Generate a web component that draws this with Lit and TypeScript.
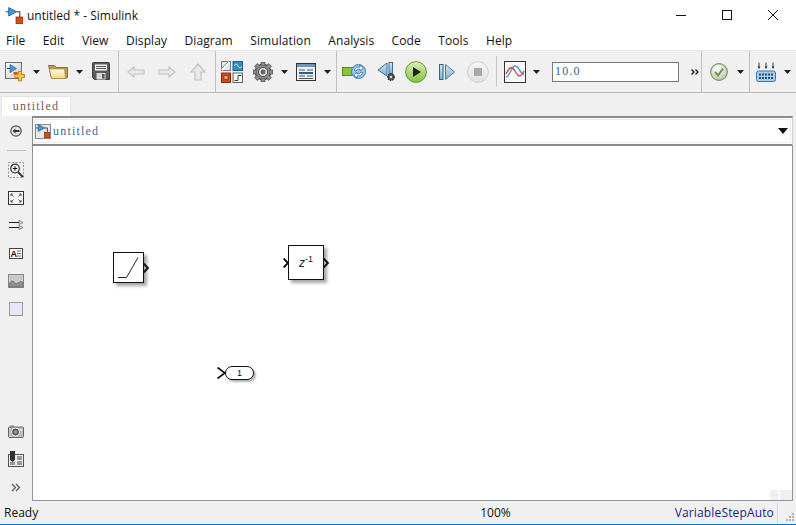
import { LitElement, css, html, svg } from 'lit'
import { customElement } from 'lit/decorators.js'

const MENUS = ['File', 'Edit', 'View', 'Display', 'Diagram', 'Simulation', 'Analysis', 'Code', 'Tools', 'Help']

const caret = (cls = '') => html`<svg class="caret ${cls}" width="7" height="4" viewBox="0 0 7 4"><path d="M0 0h7L3.500 4z" fill="#222" /></svg>`

/** Simulink mark shared by title bar, new-model and address icons. */
const logo = svg`
  <path d="M0 4.500h3" stroke="#3a3a3a" fill="none" />
  <path d="M2.500 .5L10 4.500 2.500 8.500z" fill="#3f9bd8" stroke="#1d5f96" stroke-width=".8" />
  <path d="M10 4.500h3v5" stroke="#3a3a3a" fill="none" />
  <rect x="9.500" y="9.500" width="6.500" height="6.500" fill="#d9481c" stroke="#8c2c10" stroke-width=".8" />`

const newIcon = html`<svg width="20" height="20" viewBox="0 0 20 20">
  <defs><linearGradient id="nb" x1="0" y1="0" x2="1" y2="1"><stop offset="0" stop-color="#fff" /><stop offset="1" stop-color="#c9c9c9" /></linearGradient></defs>
  <rect x=".5" y=".5" width="16" height="16" fill="url(#nb)" stroke="#6e6e6e" />
  <path d="M2 6.500h3" stroke="#333" />
  <path d="M5 2.500l6.500 4-6.500 4z" fill="#3f9bd8" stroke="#1d5f96" stroke-width=".7" />
  <rect x="8.500" y="10" width="4" height="2.500" fill="#d9481c" />
  <path d="M13.500 9.500h3v3h3v3h-3v3.500h-3v-3.500h-3.500v-3h3.500z" fill="#f6c945" stroke="#b78a1c" />
</svg>`

const folderIcon = html`<svg width="20" height="14" viewBox="0 0 20 14">
  <defs><linearGradient id="fo" x1="0" y1="0" x2="0" y2="1"><stop offset="0" stop-color="#fffbe0" /><stop offset="1" stop-color="#f2d77c" /></linearGradient></defs>
  <path d="M.5 .5h6l1.500 2h11.500v10l-2 1h-14z" fill="#b9985c" stroke="#8d7038" />
  <path d="M1.500 4h15l1 9.500h-14z" fill="url(#fo)" stroke="#a58a4c" stroke-width=".7" />
</svg>`

const saveIcon = html`<svg width="18" height="19" viewBox="0 0 18 19">
  <path d="M1.500 .5h15a1 1 0 0 1 1 1v16h-15l-2-2v-14a1 1 0 0 1 1-1z" fill="#5a5a5a" stroke="#3c3c3c" />
  <rect x="3" y="2.500" width="12" height="6" fill="#f4f4f4" />
  <path d="M4 4.500h10M4 6.500h10" stroke="#555" />
  <rect x="4.500" y="11" width="9" height="6.500" fill="#d8d8d8" />
  <rect x="10" y="12" width="2.500" height="4.500" fill="#555" />
</svg>`

const navArrow = (d: string, w: number, h: number) => html`<svg width=${w} height=${h} viewBox="0 0 ${w} ${h}">
  <path d=${d} fill="#e8e8e8" stroke="#c4c4c4" stroke-width="1.200" />
</svg>`

const gridIcon = html`<svg width="22" height="22" viewBox="0 0 22 22">
  <rect x=".5" y=".5" width="9" height="9" fill="#e4e4e4" stroke="#777" />
  <path d="M1 9L8 1" stroke="#fff" stroke-width="2" />
  <path d="M1 7L7 1" stroke="#888" />
  <rect x="12" y=".5" width="9.500" height="9" fill="#2f8cc4" stroke="#1e5f8c" />
  <path d="M13 5q2-4 4 0t4 0" stroke="#bfe4f8" fill="none" />
  <rect x=".5" y="12" width="9" height="9.500" fill="#d2491e" stroke="#8c2c10" />
  <rect x="3" y="14.500" width="4" height="4" fill="#f0a070" stroke="#8c2c10" stroke-width=".7" />
  <rect x="12" y="12" width="9.500" height="9.500" fill="#f6f6f6" stroke="#666" />
  <path d="M13.500 19.500h3.500v-5h3.500" stroke="#444" fill="none" />
</svg>`

const gear = (size: number, color: string, inner: string) => html`<svg width=${size} height=${size} viewBox="0 0 20 20">
  <path d="M10 10m-8 0a8 8 0 1 0 16 0a8 8 0 1 0-16 0" fill=${color} stroke="#3e3e3e" stroke-width=".8" />
  ${[0, 45, 90, 135, 180, 225, 270, 315].map(
    (a) => svg`<rect x="8" y="0" width="4" height="4" fill=${color} stroke="#3e3e3e" stroke-width=".6" transform="rotate(${a} 10 10)" />`,
  )}
  <circle cx="10" cy="10" r="6.500" fill=${color} />
  <circle cx="10" cy="10" r="4.600" fill=${inner} stroke="#555" />
  <circle cx="10" cy="10" r="2.400" fill="#666" />
</svg>`

const tableIcon = html`<svg width="20" height="18" viewBox="0 0 20 18">
  <rect x=".5" y=".5" width="19" height="17" fill="#f0f0f0" stroke="#333" />
  <rect x="1" y="1" width="18" height="3" fill="#6b95bd" />
  <path d="M3 7h6M11 7h6M3 13h6M11 13h6M3 15.500h14" stroke="#555" />
  <path d="M3 10h14" stroke="#1f5f9a" stroke-width="2" />
</svg>`

const updateIcon = html`<svg width="24" height="17" viewBox="0 0 24 17">
  <rect x=".5" y="4.500" width="10" height="8" fill="#8ebf3c" stroke="#5c8a20" />
  <circle cx="16.500" cy="8.500" r="7" fill="#9cc6e8" stroke="#3f7fb4" />
  <path d="M12 7q2-4 6-3V2l3.500 3-3.500 3V6q-3 0-4 2zM21 10q-2 4-6 3v2l-3.500-3 3.500-3v2q3 0 4-2z" fill="#e8f4fc" stroke="#2d6ea8" stroke-width=".8" />
</svg>`

const stepBackIcon = html`<svg width="19" height="19" viewBox="0 0 19 19">
  <defs><linearGradient id="sb" x1="0" y1="0" x2="0" y2="1"><stop offset="0" stop-color="#d6e8f6" /><stop offset="1" stop-color="#7aaed8" /></linearGradient></defs>
  <path d="M10 1v13L1 8z" fill="url(#sb)" stroke="#3c6e9a" />
  <rect x="12" y=".5" width="3.500" height="11" fill="url(#sb)" stroke="#3c6e9a" />
  <circle cx="14" cy="15" r="3.200" fill="#555" stroke="#333" stroke-dasharray="1.500 .8" stroke-width="1.400" />
  <circle cx="14" cy="15" r="1.200" fill="#ddd" />
</svg>`

const playIcon = html`<svg width="22" height="22" viewBox="0 0 22 22">
  <defs><linearGradient id="pl" x1="0" y1="0" x2="0" y2="1"><stop offset="0" stop-color="#d8eeb4" /><stop offset="1" stop-color="#86c440" /></linearGradient></defs>
  <circle cx="11" cy="11" r="10.400" fill="url(#pl)" stroke="#5f9a2c" />
  <path d="M8 6l8 5-8 5z" fill="#222" />
</svg>`

const stepFwdIcon = html`<svg width="16" height="16" viewBox="0 0 16 16">
  <defs><linearGradient id="sf" x1="0" y1="0" x2="0" y2="1"><stop offset="0" stop-color="#d6e8f6" /><stop offset="1" stop-color="#7aaed8" /></linearGradient></defs>
  <rect x=".5" y=".5" width="3.500" height="15" fill="url(#sf)" stroke="#34648e" />
  <path d="M6.500 .5v15L15.500 8z" fill="url(#sf)" stroke="#4c7ea8" />
</svg>`

const stopIcon = html`<svg width="22" height="22" viewBox="0 0 22 22">
  <defs><linearGradient id="st" x1="0" y1="0" x2="0" y2="1"><stop offset="0" stop-color="#f6f6f6" /><stop offset="1" stop-color="#e0e0e0" /></linearGradient></defs>
  <circle cx="11" cy="11" r="10.400" fill="url(#st)" stroke="#cfcfcf" />
  <rect x="7" y="7" width="8" height="8" fill="#a8a8a8" />
</svg>`

const scopeIcon = html`<svg width="22" height="22" viewBox="0 0 22 22">
  <rect x=".5" y=".5" width="21" height="21" fill="#fafafa" stroke="#333" />
  <path d="M2 16c4 0 5-11 9-11s5 8 9 8" stroke="#5c9ad0" stroke-width="1.500" fill="none" />
  <path d="M2 13c4-8 6-8 9-3s5 8 9 0" stroke="#c8403a" stroke-width="1.300" fill="none" />
</svg>`

const checkIcon = html`<svg width="18" height="18" viewBox="0 0 18 18">
  <defs><radialGradient id="ck" cx=".4" cy=".3" r=".8"><stop offset="0" stop-color="#fff" /><stop offset="1" stop-color="#b8b8b8" /></radialGradient></defs>
  <circle cx="9" cy="9" r="8.300" fill="url(#ck)" stroke="#7f9c50" stroke-width="1.200" />
  <path d="M5 9l3 3.500 5-7" stroke="#6c9a30" stroke-width="2" fill="none" />
</svg>`

const keysIcon = html`<svg width="20" height="20" viewBox="0 0 20 20">
  <rect x=".5" y="9" width="19" height="10.500" rx="2" fill="#a8cdea" stroke="#3a78ac" />
  <path d="M3 .5v5M10 .5v5M17 .5v5" stroke="#333" />
  <path d="M1.500 4.500h3L3 7zM8.500 4.500h3L10 7zM15.500 4.500h3L17 7z" fill="#234" />
  ${[11.5, 15].map((y) => [3, 6, 9, 12, 15].map((x) => svg`<rect x=${x} y=${y} width="2" height="2" fill="#1f4f7c" />`))}
</svg>`

const backIcon = html`<svg width="12" height="12" viewBox="0 0 12 12">
  <circle cx="6" cy="6" r="5.200" fill="#e6e6e6" stroke="#555" stroke-width="1.200" />
  <path d="M2.500 6l3-2.500V5h4v2h-4v1.500z" fill="#333" />
</svg>`

const zoomIcon = html`<svg width="16" height="16" viewBox="0 0 16 16">
  <rect x=".5" y=".5" width="15" height="15" fill="none" stroke="#999" stroke-dasharray="2 1.500" />
  <circle cx="7" cy="6.500" r="4.300" fill="#f6f6f6" stroke="#333" stroke-width="1.200" />
  <path d="M4.800 6.500h4.400M7 4.300v4.400" stroke="#111" />
  <path d="M10 10l5 5" stroke="#333" stroke-width="1.800" />
</svg>`

const fitIcon = html`<svg width="16" height="14" viewBox="0 0 16 14">
  <rect x=".5" y=".5" width="15" height="13" fill="#f6f6f6" stroke="#333" />
  <path d="M3 3l2.500 2.500M3 3h2M3 3v2M13 3l-2.500 2.500M13 3h-2M13 3v2M3 11l2.500-2.500M3 11h2M3 11v-2M13 11l-2.500-2.500M13 11h-2M13 11v-2" stroke="#555" fill="none" />
</svg>`

const linesIcon = html`<svg width="15" height="10" viewBox="0 0 15 10">
  <path d="M0 2.500h10M0 7.500h10" stroke="#222" />
  <path d="M10 .5l4 2-4 2zM10 5.500l4 2-4 2z" fill="#eee" stroke="#666" stroke-width=".8" />
</svg>`

const annotIcon = html`<svg width="14" height="11" viewBox="0 0 14 11">
  <rect x=".5" y=".5" width="13" height="10" fill="#fff" stroke="#444" />
  <text x="1.500" y="8.500" class="annot">A</text>
  <path d="M8 3h4M8 5.500h4M8 8h4" stroke="#666" />
</svg>`

const imageIcon = html`<svg width="16" height="14" viewBox="0 0 16 14">
  <rect x=".5" y=".5" width="15" height="13" fill="#c8c8c8" stroke="#8a8a8a" />
  <path d="M1 10q3-5 5-2t4 1 5-1v5H1z" fill="#8e8e8e" stroke="#666" stroke-width=".7" />
</svg>`

const cameraIcon = html`<svg width="16" height="13" viewBox="0 0 16 13">
  <rect x=".5" y="2" width="15" height="10.500" rx="1" fill="#bdbdbd" stroke="#666" />
  <rect x="2" y=".5" width="4" height="2" fill="#888" />
  <circle cx="7.500" cy="7" r="4" fill="#555" stroke="#eee" />
  <circle cx="7.500" cy="7" r="1.800" fill="#999" />
  <rect x="12" y="4" width="2" height="1.500" fill="#eee" />
</svg>`

const layoutIcon = html`<svg width="16" height="16" viewBox="0 0 16 16">
  <rect x=".5" y="3.500" width="15" height="12" fill="#eee" stroke="#555" />
  <rect x="2" y="0" width="5" height="9" fill="#333" />
  <path d="M2 9h5l-2.500 2z" fill="#333" />
  <rect x="9" y="5" width="5" height="4" fill="#999" />
  <rect x="9" y="10" width="5" height="4" fill="#999" />
  <rect x="2" y="11" width="5" height="3" fill="#999" />
</svg>`

const moreIcon = html`<svg width="10" height="9" viewBox="0 0 10 9">
  <path d="M1 1l3.500 3.500L1 8M5 1l3.500 3.500L5 8" fill="none" stroke="#555" stroke-width="1.200" />
</svg>`

const overflowIcon = html`<svg width="8" height="6" viewBox="0 0 8 6">
  <path d="M.5 .5L3 3 .5 5.500M4.500 .5L7 3 4.500 5.500" fill="none" stroke="#111" stroke-width="1.300" />
</svg>`

const portOut = html`<svg class="port" width="6" height="10" viewBox="0 0 6 10"><path d="M.7 .5L5 5 .7 9.500" fill="none" stroke="#111" stroke-width="1.900" /></svg>`

@customElement('app-root')
export class AppRoot extends LitElement {
  render() {
    return html`
      <div class="title">
        <svg width="17" height="17" viewBox="0 0 16 16">${logo}</svg>
        <span class="title-text">untitled * - Simulink</span>
        <div class="win">
          <svg width="46" height="16" viewBox="0 0 46 16"><path d="M18 8.500h10" stroke="#111" /></svg>
          <svg width="46" height="16" viewBox="0 0 46 16"><rect x="18.500" y="3.500" width="9" height="9" fill="none" stroke="#111" /></svg>
          <svg width="46" height="16" viewBox="0 0 46 16"><path d="M18 3l10 10M28 3L18 13" stroke="#111" /></svg>
        </div>
      </div>
      <div class="menu">${MENUS.map((m) => html`<span>${m}</span>`)}</div>
      <div class="toolbar">
        <div class="grp g1">
          ${newIcon}${caret('m8')}<span class="m8 ic">${folderIcon}</span>${caret('m8')}<span class="m9 ic">${saveIcon}</span>
        </div>
        <div class="grp g2">
          ${navArrow('M7 1L1 6l6 5V8h10V4H7z', 18, 12)}
          <span class="m13 ic">${navArrow('M11 1l6 5-6 5V8H1V4h10z', 18, 12)}</span>
          <span class="m14 ic">${navArrow('M8 1l7 8h-4v8H5V9H1z', 16, 18)}</span>
        </div>
        <div class="grp g3">
          ${gridIcon}<span class="m10 ic">${gear(20, '#8a8a8a', '#d6d6d6')}</span>${caret('m8')}
          <span class="m8 ic">${tableIcon}</span>${caret('m8')}
        </div>
        <div class="grp g4">
          ${updateIcon}<span class="m11 ic">${stepBackIcon}</span><span class="m9 ic">${playIcon}</span>
          <span class="m12 ic">${stepFwdIcon}</span><span class="m12 ic">${stopIcon}</span>
          <i class="short"></i>
          ${scopeIcon}${caret('m7')}
          <input class="time" .value=${'10.0'} />
          <span class="m12 ic">${overflowIcon}</span>
        </div>
        <div class="grp g5">${checkIcon}${caret('m9')}</div>
        <div class="grp g6">${keysIcon}${caret('m8')}</div>
      </div>
      <div class="tabs"><div class="tab">untitled</div></div>
      <div class="main">
        <div class="palette">
          ${backIcon}
          <i class="pal-sep"></i>
          <span class="zoom ic">${zoomIcon}</span>
          <span class="fit ic">${fitIcon}</span>
          <span class="lines ic">${linesIcon}</span>
          <span class="annotw ic">${annotIcon}</span>
          <span class="img ic">${imageIcon}</span>
          <i class="area"></i>
          <span class="cam ic">${cameraIcon}</span>
          <span class="lay ic">${layoutIcon}</span>
          <span class="more ic">${moreIcon}</span>
        </div>
        <div class="work">
          <div class="addr">
            <div class="addr-in">
              <span class="addr-icon"><svg width="14" height="14" viewBox="0 0 16 16">${logo}</svg></span>
              <span class="addr-text">untitled</span>
              <svg class="addr-caret" width="10" height="6" viewBox="0 0 10 6"><path d="M0 0h10L5 6z" fill="#111" /></svg>
            </div>
          </div>
          <div class="canvas">
            <div class="block ramp">
              <svg width="31" height="31" viewBox="0 0 31 31"><path d="M5 25.500h8.500L25 5.500" fill="none" stroke="#222" /></svg>
              <span class="out">${portOut}</span>
            </div>
            <div class="block delay">
              <span class="z">z<sup>-1</sup></span>
              <span class="in">${portOut}</span>
              <span class="out">${portOut}</span>
            </div>
            <div class="outport">
              <span>1</span>
              <svg class="xport" width="9" height="12" viewBox="0 0 9 12"><path d="M.5 .5L8 6 .5 11.500" fill="none" stroke="#111" stroke-width="1.700" /></svg>
            </div>
            <i class="ghost"></i>
          </div>
        </div>
      </div>
      <div class="status">
        <span class="ready">Ready</span>
        <span class="pct">100%</span>
        <span class="solver">VariableStepAuto</span>
        <i class="st-sep"></i>
        <svg class="grip" width="10" height="9" viewBox="0 0 10 9">
          ${[[7, 0], [4, 3], [7, 3], [1, 6], [4, 6], [7, 6]].map(([x, y]) => svg`<rect x=${x} y=${y} width="2" height="2" fill="#b4b4b4" />`)}
        </svg>
      </div>
    `
  }

  static styles = css`
    :host {
      display: flex;
      flex-direction: column;
      width: 796px;
      height: 525px;
      overflow: hidden;
      background: #f0f0f0;
      font: 12px 'Open Sans', 'Noto Sans', sans-serif;
      color: #111;
    }
    svg { display: block; flex: none; }
    .ic { display: block; flex: none; }
    i { display: block; flex: none; }

    .title {
      display: flex;
      align-items: center;
      height: 30px;
      flex: none;
      padding-left: 6px;
      background: #fff;
    }
    .title-text { margin-left: 4px; font-size: 12px; }
    .win { display: flex; margin-left: auto; margin-right: 0; }

    .menu {
      display: flex;
      gap: 17.4px;
      letter-spacing: 0.1px;
      align-items: center;
      height: 20px;
      flex: none;
      padding-left: 6px;
      background: #fff;
      color: #111;
    }

    .toolbar {
      display: flex;
      height: 43px;
      flex: none;
      border-top: 1px solid #e6e6e6;
      border-bottom: 1px solid #b8b8b8;
      box-sizing: border-box;
      background: #f0f0f0;
    }
    .grp {
      display: flex;
      align-items: center;
      box-sizing: border-box;
      border-right: 1px solid #c0c0c0;
      flex: none;
    }
    .g1 { width: 119px; padding-left: 5px; }
    .g2 { width: 97px; padding-left: 8px; }
    .g3 { width: 121px; padding-left: 5px; }
    .g4 { width: 365px; padding-left: 5px; }
    .g5 { width: 48px; padding-left: 8px; }
    .g6 { flex: 1; padding-left: 6px; border-right: none; }
    .m7 { margin-left: 7px; }
    .m8 { margin-left: 8px; }
    .m9 { margin-left: 9px; }
    .m10 { margin-left: 10px; }
    .m11 { margin-left: 11px; }
    .m12 { margin-left: 12px; }
    .m13 { margin-left: 13px; }
    .m14 { margin-left: 14px; }
    .short { width: 1px; height: 31px; margin: 0 7px; background: #c8c8c8; }
    .time {
      width: 127px;
      height: 20px;
      box-sizing: border-box;
      margin: 0 0 0 12px;
      padding: 0 2px;
      border: 1px solid #7a7a7a;
      outline: none;
      background: #fff;
      color: #2f5f90;
      font: 12px 'Liberation Serif', serif;
      letter-spacing: 1.2px;
    }

    .tabs {
      display: flex;
      align-items: flex-end;
      height: 23px;
      flex: none;
      padding-left: 1px;
    }
    .tab {
      display: flex;
      align-items: center;
      justify-content: center;
      width: 70px;
      height: 20px;
      box-sizing: border-box;
      background: #fff;
      border: 1px solid #e4e4e4;
      border-bottom: none;
      color: #7a5a50;
      font: 12px 'Liberation Serif', serif;
      letter-spacing: 1.2px;
    }

    .main { display: flex; flex: 1; min-height: 0; }
    .palette {
      display: flex;
      flex-direction: column;
      align-items: center;
      width: 32px;
      flex: none;
      padding-top: 9px;
      box-sizing: border-box;
    }
    .pal-sep { width: 19px; height: 1px; margin-top: 13px; background: #c0c0c0; }
    .zoom { margin-top: 11px; }
    .fit { margin-top: 13px; }
    .lines { margin-top: 15px; }
    .annotw { margin-top: 18px; }
    .annot { font: 700 9px 'Liberation Sans', sans-serif; fill: #111; }
    .img { margin-top: 15px; }
    .area {
      width: 14px;
      height: 14px;
      box-sizing: border-box;
      margin-top: 14px;
      background: #e6e6f6;
      border: 1px solid #999;
    }
    .cam { margin-top: auto; }
    .lay { margin-top: 13px; }
    .more { margin-top: 16px; margin-bottom: 9px; }

    .work {
      display: flex;
      flex-direction: column;
      flex: 1;
      margin-right: 3px;
      min-width: 0;
    }
    .addr {
      height: 30px;
      flex: none;
      box-sizing: border-box;
      border: solid #8a8a8a;
      border-width: 2px 0 2px 0;
      border-left: 1px solid #8a8a8a;
      border-right: 1px solid #d0d0d0;
      background: #fff;
      padding: 1px;
    }
    .addr-in {
      display: flex;
      align-items: center;
      height: 100%;
      box-sizing: border-box;
      border: 1px solid #ececec;
    }
    .addr-icon {
      display: flex;
      align-items: center;
      justify-content: center;
      width: 16px;
      height: 15px;
      border: 1px solid #888;
      box-sizing: border-box;
      background: #e8e8e8;
    }
    .addr-text {
      margin-left: 2px;
      color: #3a6a9a;
      font: 12px 'Liberation Serif', serif;
      letter-spacing: 1.2px;
    }
    .addr-caret { margin-left: auto; margin-right: 2px; }

    .canvas {
      position: relative;
      flex: 1;
      background: #fff;
      border: solid #8e93a0;
      border-width: 0 1px 1px 1px;
    }
    /* Diagram blocks sit at free coordinates on the model canvas. */
    .block {
      position: absolute;
      box-sizing: border-box;
      background: #fff;
      border: 1px solid #111;
      box-shadow: 3px 3px 3px rgba(0, 0, 0, 0.35);
    }
    .block svg:not(.port) { margin: -1px; }
    .ramp { left: 80px; top: 106px; width: 31px; height: 31px; }
    .delay {
      left: 255px;
      top: 99px;
      width: 36px;
      height: 35px;
      display: flex;
      align-items: center;
      justify-content: center;
    }
    .z { font: italic 12px 'Liberation Sans', sans-serif; color: #222; }
    .z sup { font-style: normal; font-size: 9px; line-height: 0; }
    .out { position: absolute; left: 100%; top: 10px; margin-left: 0; }
    .in { position: absolute; right: 100%; top: 12px; margin-right: 0; }
    .delay .out { top: 12px; }
    .outport {
      position: absolute;
      left: 192px;
      top: 220px;
      width: 29px;
      height: 14px;
      box-sizing: border-box;
      display: flex;
      align-items: center;
      justify-content: center;
      background: #fff;
      border: 1px solid #111;
      border-radius: 7px;
      box-shadow: 2px 2px 2px rgba(0, 0, 0, 0.3);
      font: 9px 'Liberation Sans', sans-serif;
    }
    .xport { position: absolute; right: 100%; top: 0; }
    .ghost {
      position: absolute;
      right: 0;
      bottom: 0;
      width: 22px;
      height: 10px;
      background: linear-gradient(90deg, #f0f0f0 0 8px, #fff 8px 10px, #f0f0f0 10px);
    }

    .status {
      display: flex;
      align-items: center;
      height: 24px;
      flex: none;
      box-sizing: border-box;
      padding-left: 4px;
      border-bottom: 1px solid #0078d7;
    }
    .pct { margin-left: 442px; }
    .solver { margin-left: auto; color: #1c1c8c; letter-spacing: 0.15px; }
    .st-sep { width: 1px; height: 20px; margin-left: 3px; margin-right: 7px; background: #d8d8d8; }
    .grip { margin-right: 1px; margin-top: 10px; }
  `
}
